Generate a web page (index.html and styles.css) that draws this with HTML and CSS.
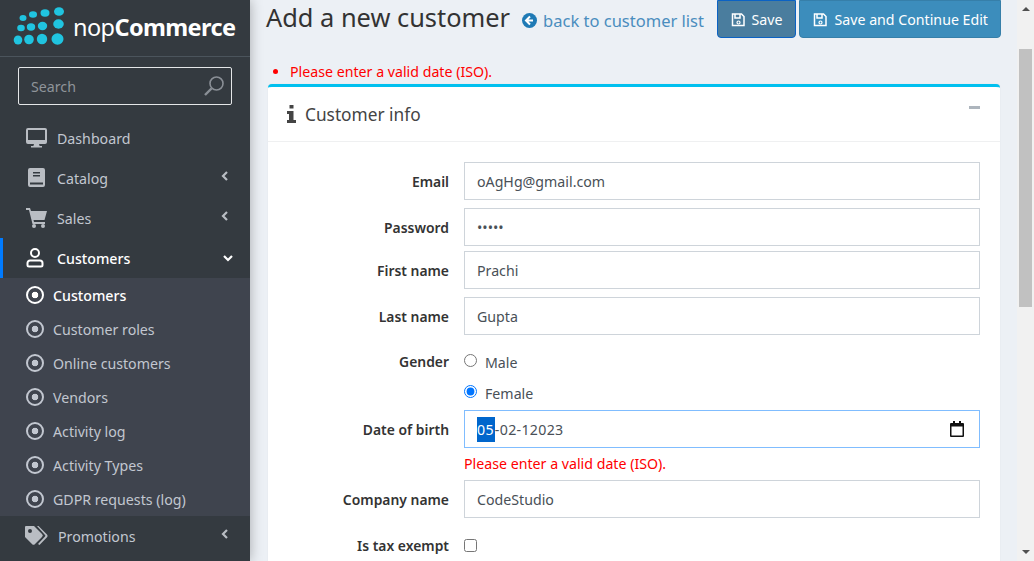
FILE: index.html
```html
<!DOCTYPE html>
<html>
<head>
  <title>Add a new customer</title>
  <link rel="stylesheet" href="styles.css">
</head>
<body>
  <div class="app">
    <aside class="sidebar">
      <div class="brand">
        <svg class="brand-dots" width="54" height="40" viewBox="0 0 54 40">
          <ellipse cx="10" cy="11" rx="3.500" ry="3" fill="#20c4e0"/>
          <ellipse cx="20" cy="7.500" rx="4" ry="3.300" fill="#20c4e0"/>
          <ellipse cx="32" cy="6" rx="4.500" ry="3.700" fill="#20c4e0"/>
          <ellipse cx="46" cy="4.500" rx="5" ry="4.300" fill="#20c4e0"/>
          <ellipse cx="8" cy="21" rx="3.800" ry="3.300" fill="#20c4e0"/>
          <ellipse cx="18" cy="20" rx="4.200" ry="3.700" fill="#20c4e0"/>
          <ellipse cx="29.500" cy="19" rx="4.700" ry="4.200" fill="#20c4e0"/>
          <ellipse cx="45.500" cy="17" rx="5.300" ry="4.700" fill="#20c4e0"/>
          <ellipse cx="5" cy="33" rx="4.300" ry="4.500" fill="#20c4e0"/>
          <ellipse cx="16" cy="32.500" rx="4.800" ry="4.800" fill="#20c4e0"/>
          <ellipse cx="29" cy="32" rx="5.200" ry="5.200" fill="#20c4e0"/>
          <ellipse cx="44.500" cy="32" rx="6" ry="5.800" fill="#20c4e0"/>
        </svg>
        <span class="brand-name">nop<b>Commerce</b></span>
      </div>
      <div class="search">
        <span>Search</span>
        <svg width="22" height="22" viewBox="0 0 22 22" fill="none" stroke="#8a8f96" stroke-width="1.600">
          <circle cx="13.500" cy="8.500" r="6.500"/>
          <path d="M8.500 13.500 2 20" stroke-width="2.400"/>
        </svg>
      </div>
      <ul class="menu">
        <li class="menu-item">
          <svg class="menu-icon" width="22" height="20" viewBox="0 0 22 20"><path fill="#b9bdc3" d="M3 0h17a2 2 0 0 1 2 2v12a2 2 0 0 1-2 2h-6l.6 2H17v1.500H6V18h2.400L9 16H3a2 2 0 0 1-2-2V2a2 2 0 0 1 2-2Zm0 2v10h17V2Z"/></svg>
          <span>Dashboard</span>
        </li>
        <li class="menu-item">
          <svg class="menu-icon" width="22" height="20" viewBox="0 0 22 20"><path fill="#b9bdc3" d="M5 0h13a2 2 0 0 1 2 2v15a2 2 0 0 1-2 2H5a2 2 0 0 1-2-2V2a2 2 0 0 1 2-2Zm3 4v1.500h7V4Zm0 3v1.500h7V7ZM5 14.500V16.500h13v-2Z"/></svg>
          <span>Catalog</span>
          <svg class="chevron" width="8" height="10" viewBox="0 0 8 10"><path d="M6 1 2 5l4 4" fill="none" stroke="#b9bdc3" stroke-width="2.200"/></svg>
        </li>
        <li class="menu-item">
          <svg class="menu-icon" width="22" height="20" viewBox="0 0 22 20"><path fill="#b9bdc3" d="M1 0h4l1 3h16l-2.500 9H8.500l.5 2h11v2H7.500L4 2H1Z"/><circle cx="9" cy="18" r="2" fill="#b9bdc3"/><circle cx="18" cy="18" r="2" fill="#b9bdc3"/></svg>
          <span>Sales</span>
          <svg class="chevron" width="8" height="10" viewBox="0 0 8 10"><path d="M6 1 2 5l4 4" fill="none" stroke="#b9bdc3" stroke-width="2.200"/></svg>
        </li>
        <li class="menu-item is-open">
          <svg class="menu-icon" width="22" height="20" viewBox="0 0 22 20" fill="none" stroke="#fff" stroke-width="2"><circle cx="10" cy="5" r="4"/><path d="M5 12.500h10a2.500 2.500 0 0 1 2.500 2.500v2a1.500 1.500 0 0 1-1.500 1.500H4A1.500 1.500 0 0 1 2.500 17v-2A2.500 2.500 0 0 1 5 12.500Z"/></svg>
          <span>Customers</span>
          <svg class="chevron-down" width="10" height="8" viewBox="0 0 10 8"><path d="M1 2l4 4 4-4" fill="none" stroke="#fff" stroke-width="2.200"/></svg>
        </li>
        <li>
          <ul class="submenu">
            <li class="sub-item is-active"><i class="bullet"></i>Customers</li>
            <li class="sub-item"><i class="bullet"></i>Customer roles</li>
            <li class="sub-item"><i class="bullet"></i>Online customers</li>
            <li class="sub-item"><i class="bullet"></i>Vendors</li>
            <li class="sub-item"><i class="bullet"></i>Activity log</li>
            <li class="sub-item"><i class="bullet"></i>Activity Types</li>
            <li class="sub-item"><i class="bullet"></i>GDPR requests (log)</li>
          </ul>
        </li>
        <li class="menu-item">
          <svg class="menu-icon menu-icon-tags" width="24" height="20" viewBox="0 0 24 20"><path fill="#b9bdc3" d="M1 0h8l8 8a2 2 0 0 1 0 3l-7 7a2 2 0 0 1-3 0L0 11V1a1 1 0 0 1 1-1Zm4 3a2 2 0 1 0 0 4 2 2 0 0 0 0-4Z"/><path fill="#b9bdc3" d="M12 0h1.500l8.500 8.500a2 2 0 0 1 0 2.800L14.500 19l-1.500-1 7-7.500a1 1 0 0 0 0-1.500Z"/></svg>
          <span>Promotions</span>
          <svg class="chevron" width="8" height="10" viewBox="0 0 8 10"><path d="M6 1 2 5l4 4" fill="none" stroke="#b9bdc3" stroke-width="2.200"/></svg>
        </li>
      </ul>
    </aside>

    <main class="content">
      <div class="page-head">
        <h1>Add a new customer</h1>
        <a class="back-link">
          <svg width="15" height="15" viewBox="0 0 15 15"><circle cx="7.500" cy="7.500" r="7.500" fill="#1f7ab5"/><path d="M8 3.500 4 7.500l4 4M4.500 7.500h6.500" fill="none" stroke="#fff" stroke-width="2"/></svg>
          back to customer list
        </a>
        <div class="actions">
          <button class="btn btn-save">
            <svg class="disk" width="14" height="14" viewBox="0 0 14 14"><path d="M1.500 1h9l2.500 2.500v9H1.500ZM4 1.500v3.500h5V1.500" fill="none" stroke="#fff" stroke-width="1.500"/><circle cx="7.500" cy="9.500" r="1.500" fill="none" stroke="#fff" stroke-width="1.200"/></svg>
            Save
          </button>
          <button class="btn btn-continue">
            <svg class="disk" width="14" height="14" viewBox="0 0 14 14"><path d="M1.500 1h9l2.500 2.500v9H1.500ZM4 1.500v3.500h5V1.500" fill="none" stroke="#fff" stroke-width="1.500"/><circle cx="7.500" cy="9.500" r="1.500" fill="none" stroke="#fff" stroke-width="1.200"/></svg>
            Save and Continue Edit
          </button>
        </div>
      </div>

      <ul class="summary"><li>Please enter a valid date (ISO).</li></ul>

      <section class="card">
        <header class="card-head">
          <svg width="9" height="18" viewBox="0 0 9 18"><path fill="#444" d="M2.500 0h4v3.500h-4ZM0 6h6.500v9H9v3H0v-3h2V9H0Z"/></svg>
          <span>Customer info</span>
          <i class="collapse"></i>
        </header>
        <div class="card-body">
          <div class="row row-email">
            <label>Email</label>
            <input class="field" value="oAgHg@gmail.com">
          </div>
          <div class="row row-password">
            <label>Password</label>
            <input class="field field-wide" type="password" value="12345">
          </div>
          <div class="row row-first">
            <label>First name</label>
            <input class="field" value="Prachi">
          </div>
          <div class="row row-last">
            <label>Last name</label>
            <input class="field" value="Gupta">
          </div>
          <div class="row row-gender">
            <label>Gender</label>
            <div class="radios">
              <div class="radio"><input type="radio" name="gender"><span>Male</span></div>
              <div class="radio"><input type="radio" name="gender" checked><span>Female</span></div>
            </div>
          </div>
          <div class="row row-dob">
            <label>Date of birth</label>
            <div class="field field-date">
              <span class="date-text"><span class="date-part">05</span>-02-12023</span>
              <svg width="14" height="16" viewBox="0 0 14 16"><path fill="#111" d="M3 0h2v2h4V0h2v2h2a1 1 0 0 1 1 1v12a1 1 0 0 1-1 1H1a1 1 0 0 1-1-1V3a1 1 0 0 1 1-1h2Zm-1.500 5.500V14.500h11V5.500Z"/></svg>
            </div>
          </div>
          <p class="field-error">Please enter a valid date (ISO).</p>
          <div class="row row-company">
            <label>Company name</label>
            <input class="field" value="CodeStudio">
          </div>
          <div class="row row-tax">
            <label>Is tax exempt</label>
            <input type="checkbox">
          </div>
        </div>
      </section>
    </main>

    <div class="scrollbar">
      <i class="arrow-up"></i>
      <div class="thumb"></div>
      <i class="arrow-down"></i>
    </div>
  </div>
</body>
</html>
```

FILE: styles.css
```css
* {
  box-sizing: border-box;
}

html, body {
  height: 100%;
  margin: 0;
  overflow: hidden;
}

body {
  font-family: "Noto Sans", "Open Sans", sans-serif;
  font-size: 14.2px;
  color: #444;
}

ul {
  list-style: none;
  margin: 0;
  padding: 0;
}

.app {
  display: flex;
  height: 561px;
  background: #ecf0f5;
}

/* sidebar */
.sidebar {
  flex: 0 0 250px;
  background: #343a40;
  box-shadow: 0 0 12px rgba(0, 0, 0, .3);
  overflow: hidden;
  position: relative;
}

.brand {
  display: flex;
  align-items: center;
  gap: 6px;
  height: 57px;
  padding: 0 0 3px 13px;
  border-bottom: 1px solid #4b545c;
}

.brand-name {
  font-size: 23.5px;
  letter-spacing: -.6px;
  color: #fff;
}

.brand-name b {
  font-weight: 700;
}

.search {
  display: flex;
  align-items: center;
  justify-content: space-between;
  height: 38px;
  margin: 10px 18px 13px;
  padding: 0 6px 0 12px;
  border: 1px solid #e4e6e8;
  border-radius: 2px;
  color: #8f949a;
}

.menu-item {
  display: flex;
  align-items: center;
  height: 40px;
  padding: 0 21px 0 25px;
  color: #c2c7d0;
}

.menu-icon {
  flex: 0 0 auto;
  margin-right: 10px;
}

.menu-icon-tags {
  margin-right: 9px;
}

.menu-item .chevron {
  margin-left: auto;
  margin-top: -4px;
}

.menu-item.is-open {
  color: #fff;
  font-weight: 500;
  box-shadow: inset 3px 0 0 #007bff;
}

.chevron-down {
  margin-left: auto;
  margin-right: -4px;
}

.submenu {
  background: #3f444e;
}

.sub-item {
  display: flex;
  align-items: center;
  height: 34px;
  padding-left: 26px;
  color: #c2c7d0;
}

.sub-item.is-active {
  color: #fff;
  font-weight: 500;
}

.bullet {
  flex: 0 0 auto;
  width: 18px;
  height: 18px;
  margin-right: 9px;
  border: 2px solid currentColor;
  border-radius: 50%;
  background: radial-gradient(circle, currentColor 0, currentColor 3px, transparent 3.600px);
}

/* main column */
.content {
  flex: 1;
  min-width: 0;
  padding: 0 17px 0 18px;
  overflow: hidden;
}

.page-head {
  display: flex;
  align-items: center;
  height: 38px;
}

h1 {
  margin: -5px 0 0 -2px;
  font-size: 25.4px;
  font-weight: 400;
  color: #333;
}

.back-link {
  display: flex;
  align-items: center;
  gap: 6px;
  margin: 2px 0 0 12px;
  font-size: 16.500px;
  color: #4a8dbe;
}

.actions {
  display: flex;
  gap: 3px;
  margin: 0 -1px 0 auto;
}

.btn {
  display: flex;
  align-items: center;
  gap: 7px;
  height: 38px;
  padding: 0 12px 0 13px;
  border: 1px solid #367fa9;
  border-radius: 0 0 4px 4px;
  background: #3c8dbc;
  color: #fff;
  font: 14.2px "Noto Sans", sans-serif;
}

.btn-save {
  padding-right: 13px;
  background: #4a7d9e;
  border-color: #0b62c4;
}

.disk {
  margin-top: 2px;
}

.summary {
  margin: 25px 0 0;
  height: 21px;
  padding-left: 22px;
  color: #f00;
}

.summary li {
  list-style: disc;
  line-height: 18px;
}

.card {
  background: #fff;
  border-top: 3px solid #00c0ef;
  border-radius: 4px 4px 0 0;
  height: 480px;
  box-shadow: 0 0 1px rgba(0, 0, 0, .125);
}

.card-head {
  display: flex;
  align-items: center;
  gap: 9px;
  height: 55px;
  padding: 0 20px 0 19px;
  border-bottom: 1px solid #eff0f1;
  font-size: 17.300px;
}

.collapse {
  width: 11px;
  height: 3px;
  margin: -14px 0 0 auto;
  background: #adb5bd;
}

.card-body {
  padding: 20px 20px 0 0;
}

.row {
  display: flex;
  align-items: center;
}

.row label {
  flex: 0 0 181px;
  margin-right: 15px;
  text-align: right;
  font-size: 13.900px;
  font-weight: 600;
  color: #333;
}

.field {
  width: 516px;
  height: 38px;
  padding: 0 12px;
  border: 1px solid #ced4da;
  border-radius: 0;
  font: 14.2px "Noto Sans", sans-serif;
  color: #495057;
  outline: 0;
}

.field-wide {
  width: 517px;
}

.row-password { margin-top: 8px; }
.row-first { margin-top: 5px; }
.row-last { margin-top: 8px; }
.row-gender { margin-top: 11px; align-items: flex-start; }
.row-dob { margin-top: 2px; }
.row-tax { margin-top: 18px; }

.row-gender label {
  padding-top: 6px;
}

.radios {
  display: flex;
  flex-direction: column;
}

.radio {
  display: flex;
  align-items: center;
  height: 31px;
}

.radio input {
  width: 13px;
  height: 13px;
  margin: -3px 8px 0 0;
}

.radio span {
  margin-top: 2px;
  color: #495057;
}

.field-date {
  display: flex;
  align-items: center;
  justify-content: space-between;
  padding-right: 15px;
  border-color: #80bdff;
}

.date-text {
  letter-spacing: .3px;
}

.date-part {
  padding: 3px 1px 3px 0;
  background: #0066cc;
  color: #fff;
}

.field-error {
  margin: 0;
  height: 32px;
  padding-left: 196px;
  line-height: 32px;
  color: #f00;
}

.row-tax input {
  width: 13px;
  height: 13px;
  margin: 0;
}

/* drawn scrollbar, the page itself does not scroll here */
.scrollbar {
  flex: 0 0 17px;
  display: flex;
  flex-direction: column;
  background: #f1f1f1;
  position: relative;
}

.thumb {
  height: 258px;
  margin: 49px 2px 0;
  background: #c1c1c1;
}

.arrow-up, .arrow-down {
  position: absolute;
  left: 5px;
  width: 0;
  height: 0;
  border: 4px solid transparent;
}

.arrow-up {
  top: 3px;
  border-bottom: 4px solid #505050;
}

.arrow-down {
  bottom: 3px;
  border-top: 4px solid #505050;
}
```
